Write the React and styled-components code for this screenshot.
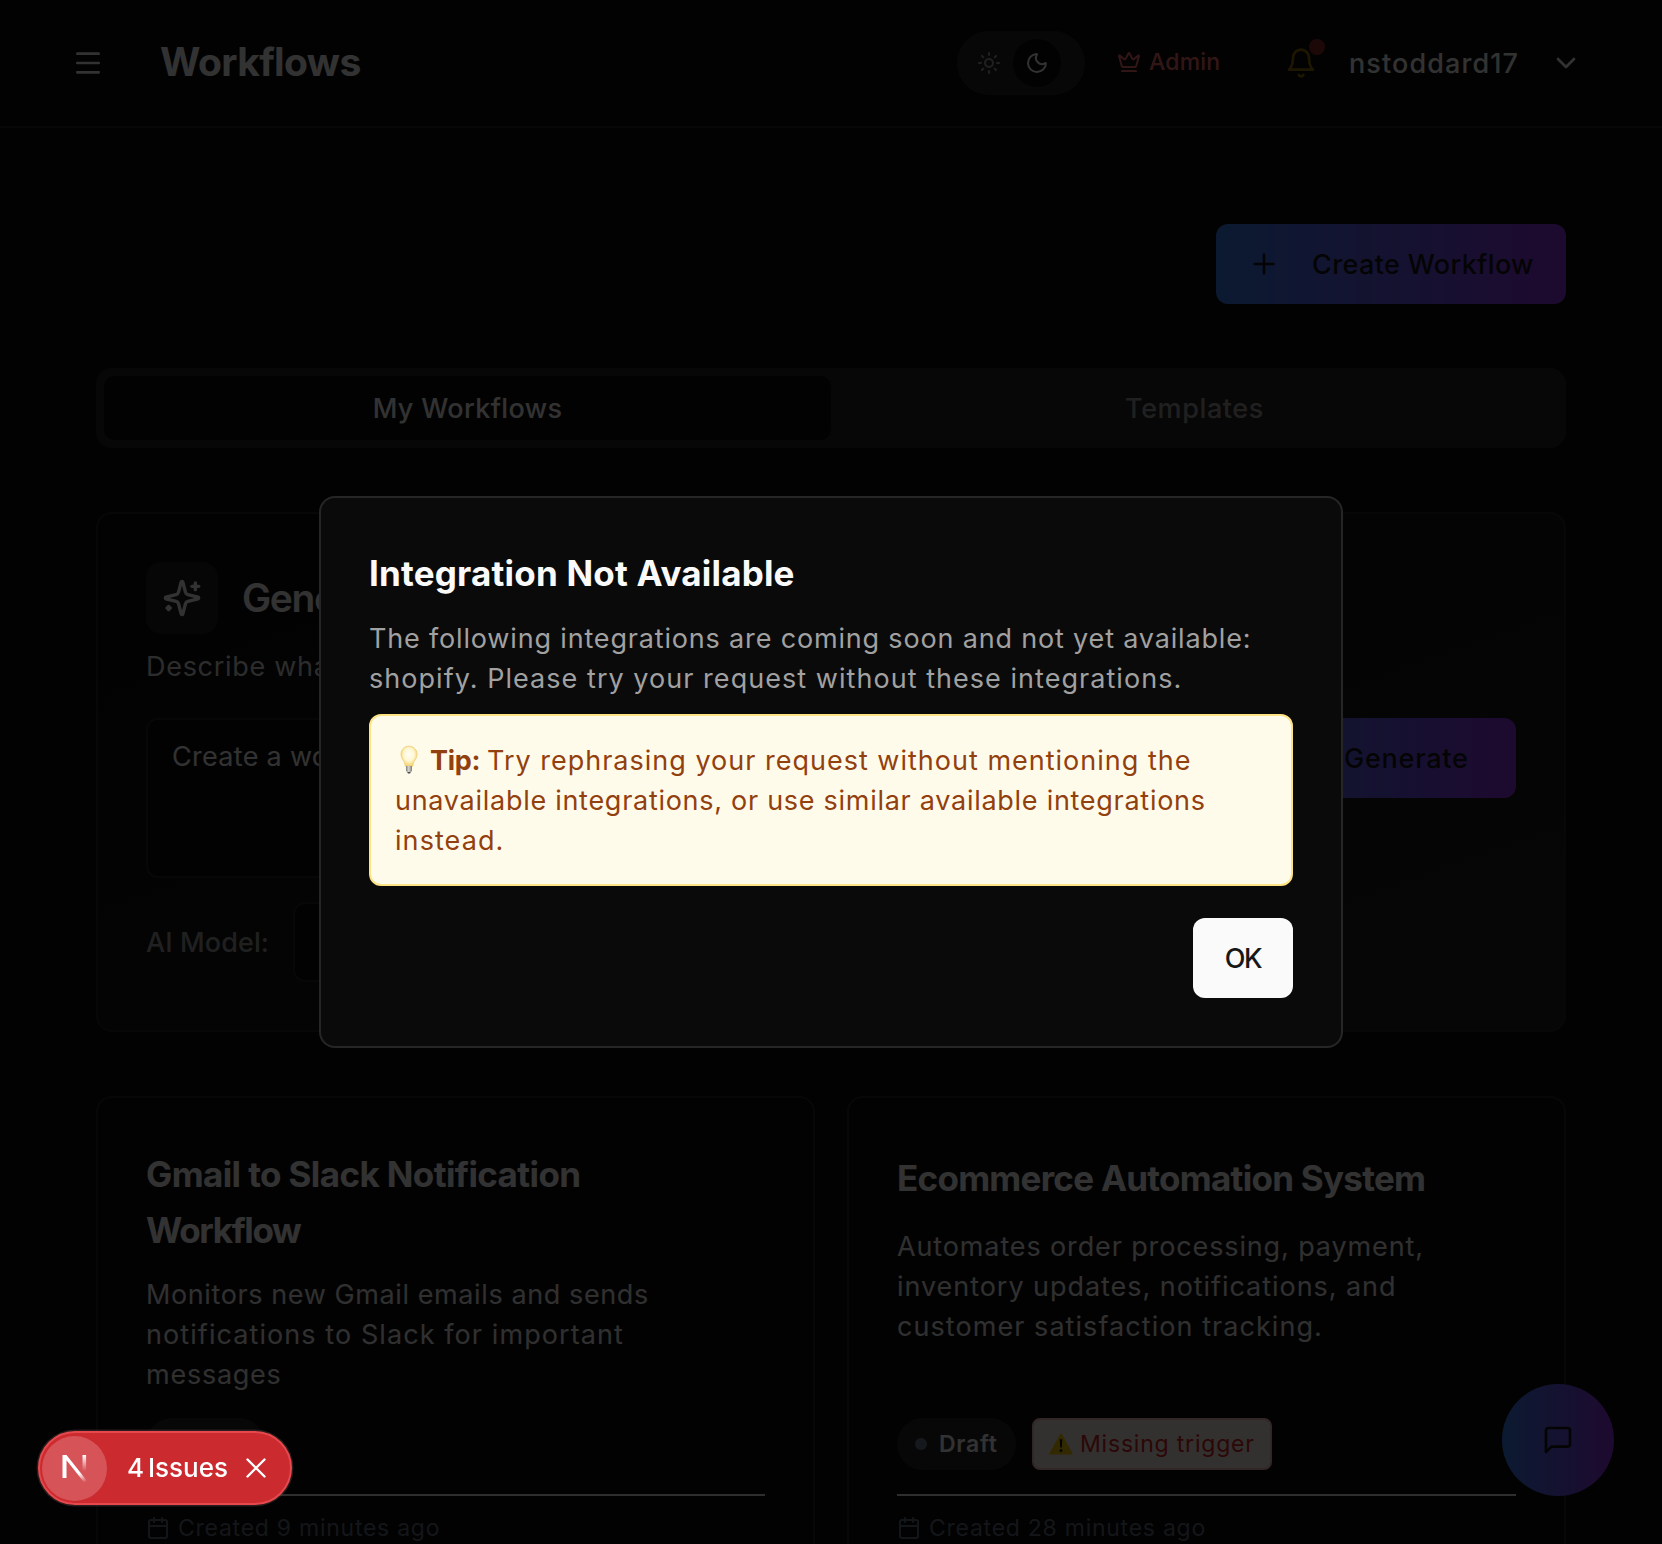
import React from "react";
import styled, { createGlobalStyle, css } from "styled-components";
import { Menu, Sun, Moon, ChevronDown, Plus, Calendar } from "lucide-react";

const GlobalStyle = createGlobalStyle`
  *, *::before, *::after { box-sizing: border-box; }
  html, body { margin: 0; background: #020202; }
  body {
    font-family: Inter, "Liberation Sans", sans-serif;
    font-size: 27px;
    line-height: 40px;
    color: #fafafa;
    overflow: hidden;
  }
  h1, h2, h3, p { margin: 0; }
  button { font: inherit; border: 0; padding: 0; }
  svg { display: block; flex: none; }
`;

const brandGradient = css`
  background: linear-gradient(to right, #3b82f6, #9333ea);
`;

const Page = styled.div`
  height: 1544px;
  overflow: hidden;
  background: #0a0a0a;
`;

const Line = styled.span`
  display: block;
  padding-top: 2px;
  line-height: 38px;
  white-space: nowrap;
  letter-spacing: ${(p) => p.$track || 0}px;
`;

/* ---------- header ---------- */

const Header = styled.header`
  display: flex;
  align-items: center;
  height: 128px;
  padding: 0 80px 0 72px;
  border-bottom: 2px solid #262626;
`;

const PageTitle = styled.h1`
  margin-left: 56px;
  padding-bottom: 2px;
  font-size: 39px;
  font-weight: 700;
  line-height: 56px;
  letter-spacing: -0.6px;
`;

const HeaderActions = styled.div`
  display: flex;
  align-items: center;
  margin-left: auto;
`;

const ThemeToggle = styled.div`
  display: flex;
  align-items: center;
  width: 128px;
  height: 64px;
  padding: 8px;
  border-radius: 32px;
  background: #262626;
`;

const ThemeOption = styled.button`
  display: flex;
  align-items: center;
  justify-content: center;
  width: 48px;
  height: 48px;
  border-radius: 50%;
  background: ${(p) => (p.$active ? "#0a0a0a" : "transparent")};
  color: ${(p) => (p.$active ? "#fafafa" : "#a1a1a1")};
`;

const AdminLink = styled.div`
  display: flex;
  align-items: center;
  gap: 8px;
  width: 104px;
  margin-left: 32px;
  padding-bottom: 2px;
  font-size: 23px;
  line-height: 32px;
  font-weight: 500;
  letter-spacing: 0.2px;
  color: #f87171;
`;

const Notifications = styled.div`
  position: relative;
  margin-left: 64px;
  color: #eab308;
  opacity: 0.6;
`;

const NotificationDot = styled.span`
  position: absolute;
  top: -8px;
  right: -8px;
  width: 16px;
  height: 16px;
  border-radius: 50%;
  background: #ef4444;
`;

const UserName = styled.span`
  width: 169px;
  margin: 0 32px;
  padding-top: 2px;
  font-weight: 500;
  letter-spacing: 1.1px;
`;

/* ---------- main ---------- */

const Main = styled.main`
  display: flex;
  flex-direction: column;
  gap: 64px;
  padding: 96px 96px 0;
`;

const Toolbar = styled.div`
  display: flex;
  justify-content: flex-end;
`;

const GradientButton = styled.button`
  display: flex;
  align-items: center;
  gap: 32px;
  width: ${(p) => p.$width}px;
  height: 80px;
  padding: 0 ${(p) => p.$pad}px;
  border-radius: 12px;
  white-space: nowrap;
  font-weight: 500;
  letter-spacing: ${(p) => p.$track}px;
  color: #171717;
  ${brandGradient}
`;

const ButtonLabel = styled.span`
  padding-top: 2px;
`;

const Tabs = styled.div`
  display: grid;
  grid-template-columns: 1fr 1fr;
  height: 80px;
  padding: 8px;
  border-radius: 16px;
  background: #262626;
`;

const Tab = styled.button`
  padding-top: 2px;
  border-radius: 10px;
  font-weight: 500;
  letter-spacing: ${(p) => p.$track}px;
  background: ${(p) => (p.$active ? "#0a0a0a" : "transparent")};
  color: ${(p) => (p.$active ? "#fafafa" : "#a1a1a1")};
`;

const Generator = styled.section`
  height: 520px;
  padding: 48px;
  border: 2px solid #262626;
  border-radius: 16px;
  background: linear-gradient(to bottom right, #0a0a0a, #222222);
`;

const GeneratorHead = styled.div`
  display: flex;
  align-items: center;
  gap: 24px;
`;

const IconTile = styled.div`
  display: flex;
  align-items: center;
  justify-content: center;
  width: 72px;
  height: 72px;
  border-radius: 16px;
  background: #222222;
`;

const GeneratorTitle = styled.h2`
  font-size: 39px;
  font-weight: 600;
  line-height: 56px;
  letter-spacing: -1.4px;
`;

const GeneratorHint = styled.p`
  margin: 13px 0 31px;
  letter-spacing: 0.7px;
  color: #dcdcdc;
`;

const PromptRow = styled.div`
  display: flex;
  align-items: flex-start;
  gap: 24px;
`;

const Prompt = styled.div`
  flex: 1;
  height: 160px;
  padding: 17px 24px;
  border: 2px solid #262626;
  border-radius: 12px;
  background: #0a0a0a;
  letter-spacing: 0.3px;
`;

const ModelRow = styled.div`
  display: flex;
  align-items: center;
  gap: 24px;
  margin-top: 24px;
`;

const ModelLabel = styled.label`
  width: 123px;
  padding-top: 2px;
  white-space: nowrap;
  font-weight: 500;
  letter-spacing: 0.1px;
  color: #a1a1a1;
`;

const ModelSelect = styled.div`
  width: 360px;
  height: 80px;
  padding: 18px 24px;
  border: 2px solid #262626;
  border-radius: 12px;
  background: #0a0a0a;
`;

/* ---------- workflow cards ---------- */

const CardGrid = styled.div`
  display: grid;
  grid-template-columns: 1fr 1fr;
  gap: 32px;
`;

const Card = styled.article`
  display: flex;
  flex-direction: column;
  height: 560px;
  padding: 48px;
  border: 2px solid #262626;
  border-radius: 16px;
`;

const CardHead = styled.div`
  display: flex;
  align-items: center;
  min-height: 64px;
  margin-bottom: 16px;
`;

const CardTitle = styled.h3`
  font-size: 35px;
  font-weight: 700;
`;

const TitleLine = styled.span`
  display: block;
  line-height: 56px;
  white-space: nowrap;
  letter-spacing: ${(p) => p.$track}px;
`;

const CardText = styled.p`
  height: ${(p) => p.$height}px;
  color: #fafafa;
  opacity: 0.95;
`;

const Badges = styled.div`
  display: flex;
  gap: 16px;
  margin-bottom: 24px;
`;

const StatusBadge = styled.div`
  display: flex;
  align-items: center;
  gap: 12px;
  width: 119px;
  height: 52px;
  padding-left: 18px;
  border-radius: 26px;
  background: #262626;
  font-size: 23px;
  font-weight: 600;
  letter-spacing: 0.75px;
`;

const StatusDot = styled.span`
  width: 12px;
  height: 12px;
  border-radius: 50%;
  background: #6b7a8c;
`;

const WarningBadge = styled.div`
  display: flex;
  align-items: center;
  gap: 7px;
  width: 240px;
  height: 52px;
  padding-left: 15px;
  border: 2px solid #f5c2c2;
  border-radius: 8px;
  background: #fbf3ef;
  font-size: 23px;
  letter-spacing: 0.8px;
  white-space: nowrap;
  color: #dc2626;
`;

const CardFoot = styled.div`
  display: flex;
  align-items: center;
  gap: 8px;
  padding-top: 16px;
  border-top: 2px solid #e5e7eb;
  font-size: 23px;
  line-height: 32px;
  letter-spacing: 0.74px;
  color: #626d7e;
`;

const ChatButton = styled.button`
  position: fixed;
  right: 48px;
  bottom: 48px;
  display: flex;
  align-items: center;
  justify-content: center;
  width: 112px;
  height: 112px;
  border-radius: 50%;
  color: #171717;
  ${brandGradient}
`;

/* ---------- dialog ---------- */

const Overlay = styled.div`
  position: fixed;
  inset: 0;
  display: flex;
  align-items: center;
  justify-content: center;
  background: rgba(0, 0, 0, 0.8);
`;

const Dialog = styled.div`
  width: 1024px;
  padding: 48px;
  border: 2px solid #262626;
  border-radius: 16px;
  background: #0a0a0a;
`;

const DialogTitle = styled.h2`
  padding-bottom: 2px;
  font-size: 35px;
  font-weight: 700;
  line-height: 54px;
  letter-spacing: 0.2px;
`;

const DialogText = styled.p`
  margin: 16px 0;
  color: #a1a1a1;
`;

const Tip = styled.div`
  padding: 24px;
  border: 2px solid #fde383;
  border-radius: 12px;
  background: #fffbeb;
  color: #92400e;
`;

const TipLead = styled.span`
  display: flex;
  align-items: center;
`;

const TipLabel = styled.strong`
  width: 57px;
  margin-left: 11px;
  padding-top: 2px;
  line-height: 38px;
  font-weight: 700;
  letter-spacing: -0.25px;
`;

const DialogActions = styled.div`
  display: flex;
  justify-content: flex-end;
  margin-top: 32px;
`;

const OkButton = styled.button`
  width: 100px;
  height: 80px;
  padding-top: 2px;
  border-radius: 12px;
  background: #fafafa;
  color: #171717;
  font-weight: 500;
  letter-spacing: -1.4px;
`;

/* ---------- dev indicator ---------- */

const Issues = styled.div`
  position: fixed;
  left: 38px;
  bottom: 39px;
  display: flex;
  align-items: center;
  width: 254px;
  height: 74px;
  padding-left: 2px;
  border: 2px solid #e5484d;
  border-radius: 37px;
  background: #cb2a2f;
  box-shadow: 0 0 0 1.5px rgba(90, 60, 60, 0.45);
  font-size: 26px;
  font-weight: 500;
  color: #ffffff;
`;

const IssuesLogo = styled.div`
  display: flex;
  align-items: center;
  justify-content: center;
  width: 65px;
  height: 65px;
  border-radius: 50%;
  background: #d65358;
`;

const IssuesText = styled.span`
  width: 119px;
  margin-left: 20px;
  white-space: nowrap;
  word-spacing: -3px;
`;

/* ---------- drawings ---------- */

const Stroke = ({ size, children, width = 2 }) => (
  <svg width={size} height={size} viewBox="0 0 24 24" fill="none" stroke="currentColor"
    strokeWidth={width} strokeLinecap="round" strokeLinejoin="round">
    {children}
  </svg>
);

const CrownIcon = () => (
  <Stroke size={24}>
    <path d="M11.562 3.266a.5.5 0 0 1 .876 0L15.39 8.87a1 1 0 0 0 1.516.294L21.183 5.5a.5.5 0 0 1 .798.519l-2.834 10.246a1 1 0 0 1-.956.734H5.81a1 1 0 0 1-.957-.734L2.02 6.02a.5.5 0 0 1 .798-.519l4.276 3.664a1 1 0 0 0 1.516-.294z" />
    <path d="M5 21h14" />
  </Stroke>
);

const BellIcon = () => (
  <Stroke size={32}>
    <path d="M6 8a6 6 0 0 1 12 0c0 7 3 9 3 9H3s3-2 3-9" />
    <path d="M10.3 21a1.94 1.94 0 0 0 3.4 0" />
  </Stroke>
);

const SparklesIcon = ({ size }) => (
  <Stroke size={size}>
    <path d="M9.937 15.5A2 2 0 0 0 8.5 14.063l-6.135-1.582a.5.5 0 0 1 0-.962L8.5 9.936A2 2 0 0 0 9.937 8.5l1.582-6.135a.5.5 0 0 1 .963 0L14.063 8.5A2 2 0 0 0 15.5 9.937l6.135 1.581a.5.5 0 0 1 0 .964L15.5 14.063a2 2 0 0 0-1.437 1.437l-1.582 6.135a.5.5 0 0 1-.963 0z" />
    <path d="M20 3v4" />
    <path d="M22 5h-4" />
    <path d="M4 17v2" />
    <path d="M5 18H3" />
  </Stroke>
);

const ChatIcon = () => (
  <Stroke size={32}>
    <path d="M21 15a2 2 0 0 1-2 2H7l-4 4V5a2 2 0 0 1 2-2h14a2 2 0 0 1 2 2z" />
  </Stroke>
);

const BulbIcon = () => (
  <svg width="24" height="30" viewBox="0 0 24 30">
    <defs>
      <radialGradient id="glass" cx="0.5" cy="0.42" r="0.58">
        <stop offset="0" stopColor="#fffef8" />
        <stop offset="0.55" stopColor="#fff7d2" />
        <stop offset="1" stopColor="#f3cf66" />
      </radialGradient>
      <linearGradient id="cap" x1="0" y1="0" x2="1" y2="0">
        <stop offset="0" stopColor="#7f7f7c" />
        <stop offset="0.45" stopColor="#d6d6d3" />
        <stop offset="1" stopColor="#7a7a77" />
      </linearGradient>
    </defs>
    <path d="M14 1.2c-4.6 0-8 3.5-8 8 0 3.3 1.7 5.2 3 7.4.9 1.5 1 3.2 1.3 4.6h7.4c.3-1.4.4-3.1 1.3-4.6 1.3-2.2 3-4.1 3-7.4 0-4.5-3.4-8-8-8z" fill="url(#glass)" stroke="#efd079" strokeWidth="0.9" />
    <path d="M11 21h6v4.8l-1.3 1.4h-3.4L11 25.8z" fill="url(#cap)" />
    <path d="M12.2 27h3.600l-.8 1.600h-2z" fill="#4b4b4b" />
  </svg>
);

const WarningIcon = () => (
  <svg width="24" height="22" viewBox="0 0 24 22">
    <path d="M12 1.2 22.8 20.6H1.2z" fill="#ffcc00" stroke="#ffcc00" strokeWidth="1.6" strokeLinejoin="round" />
    <path d="M10.7 6.2h2.6l-.5 8.4h-1.6z" fill="#111111" />
    <circle cx="12" cy="17.6" r="1.4" fill="#111111" />
  </svg>
);

const NLogo = () => (
  <svg width="28" height="34" viewBox="0 0 28 34">
    <defs>
      <linearGradient id="diag" x1="14" y1="16" x2="25" y2="31" gradientUnits="userSpaceOnUse">
        <stop offset="0.4" stopColor="#fff" />
        <stop offset="1" stopColor="#fff" stopOpacity="0" />
      </linearGradient>
      <linearGradient id="stem" x1="0" y1="4" x2="0" y2="20" gradientUnits="userSpaceOnUse">
        <stop offset="0" stopColor="#fff" />
        <stop offset="1" stopColor="#fff" stopOpacity="0" />
      </linearGradient>
    </defs>
    <path d="M1.5 4h4L26.5 30.5l-2.500 2L5.500 9.200V27h-4z" fill="url(#diag)" />
    <path d="M21.500 4h3.600v17h-3.600z" fill="url(#stem)" />
  </svg>
);

const workflows = [
  {
    title: [["Gmail to Slack Notification", -0.61], ["Workflow", -1.35]],
    text: [
      ["Monitors new Gmail emails and sends", 0.6],
      ["notifications to Slack for important", 1.08],
      ["messages", 0.75],
    ],
    textHeight: 144,
    created: "Created 9 minutes ago",
  },
  {
    title: [["Ecommerce Automation System", -0.73]],
    text: [
      ["Automates order processing, payment,", 0.87],
      ["inventory updates, notifications, and", 0.95],
      ["customer satisfaction tracking.", 1.06],
    ],
    textHeight: 192,
    status: "Draft",
    warning: "Missing trigger",
    created: "Created 28 minutes ago",
  },
];

const WorkflowCard = ({ data }) => (
  <Card>
    <CardHead>
      <CardTitle>
        {data.title.map(([text, track]) => (
          <TitleLine key={text} $track={track}>{text}</TitleLine>
        ))}
      </CardTitle>
    </CardHead>
    <CardText $height={data.textHeight}>
      {data.text.map(([text, track]) => (
        <Line key={text} $track={track}>{text}</Line>
      ))}
    </CardText>
    <Badges>
      <StatusBadge><StatusDot />{data.status}</StatusBadge>
      {data.warning && <WarningBadge><WarningIcon />{data.warning}</WarningBadge>}
    </Badges>
    <CardFoot><Calendar size={24} />{data.created}</CardFoot>
  </Card>
);

export default function App() {
  return (
    <>
      <GlobalStyle />
      <Page>
        <Header>
          <Menu size={32} />
          <PageTitle>Workflows</PageTitle>
          <HeaderActions>
            <ThemeToggle>
              <ThemeOption><Sun size={24} /></ThemeOption>
              <ThemeOption $active><Moon size={24} /></ThemeOption>
            </ThemeToggle>
            <AdminLink><CrownIcon />Admin</AdminLink>
            <Notifications><BellIcon /><NotificationDot /></Notifications>
            <UserName>nstoddard17</UserName>
            <ChevronDown size={32} />
          </HeaderActions>
        </Header>
        <Main>
          <Toolbar>
            <GradientButton $width={350} $pad={32} $track={0.36}>
              <Plus size={32} /><ButtonLabel>Create Workflow</ButtonLabel>
            </GradientButton>
          </Toolbar>
          <Tabs>
            <Tab $active $track={0.36}>My Workflows</Tab>
            <Tab $track={0.6}>Templates</Tab>
          </Tabs>
          <Generator>
            <GeneratorHead>
              <IconTile><SparklesIcon size={40} /></IconTile>
              <GeneratorTitle>Generate</GeneratorTitle>
            </GeneratorHead>
            <GeneratorHint>Describe what</GeneratorHint>
            <PromptRow>
              <Prompt>Create a workflow</Prompt>
              <GradientButton $width={284} $pad={48} $track={0.75}>
                <SparklesIcon size={32} /><ButtonLabel>Generate</ButtonLabel>
              </GradientButton>
            </PromptRow>
            <ModelRow>
              <ModelLabel>AI Model:</ModelLabel>
              <ModelSelect />
            </ModelRow>
          </Generator>
          <CardGrid>
            {workflows.map((w) => <WorkflowCard key={w.created} data={w} />)}
          </CardGrid>
        </Main>
      </Page>
      <ChatButton><ChatIcon /></ChatButton>
      <Overlay>
        <Dialog>
          <DialogTitle>Integration Not Available</DialogTitle>
          <DialogText>
            <Line $track={0.83}>The following integrations are coming soon and not yet available:</Line>
            <Line $track={1.04}>shopify. Please try your request without these integrations.</Line>
          </DialogText>
          <Tip>
            <TipLead>
              <BulbIcon />
              <TipLabel>Tip:</TipLabel>
              <Line $track={1.0}>Try rephrasing your request without mentioning the</Line>
            </TipLead>
            <Line $track={0.72}>unavailable integrations, or use similar available integrations</Line>
            <Line $track={1.07}>instead.</Line>
          </Tip>
          <DialogActions><OkButton>OK</OkButton></DialogActions>
        </Dialog>
      </Overlay>
      <Issues>
        <IssuesLogo><NLogo /></IssuesLogo>
        <IssuesText>4 Issues</IssuesText>
        <svg width="20" height="20" viewBox="0 0 20 20" fill="none" stroke="#fff" strokeWidth="2.4" strokeLinecap="round">
          <path d="M1.5 1.5l17 17M18.5 1.5l-17 17" />
        </svg>
      </Issues>
    </>
  );
}
